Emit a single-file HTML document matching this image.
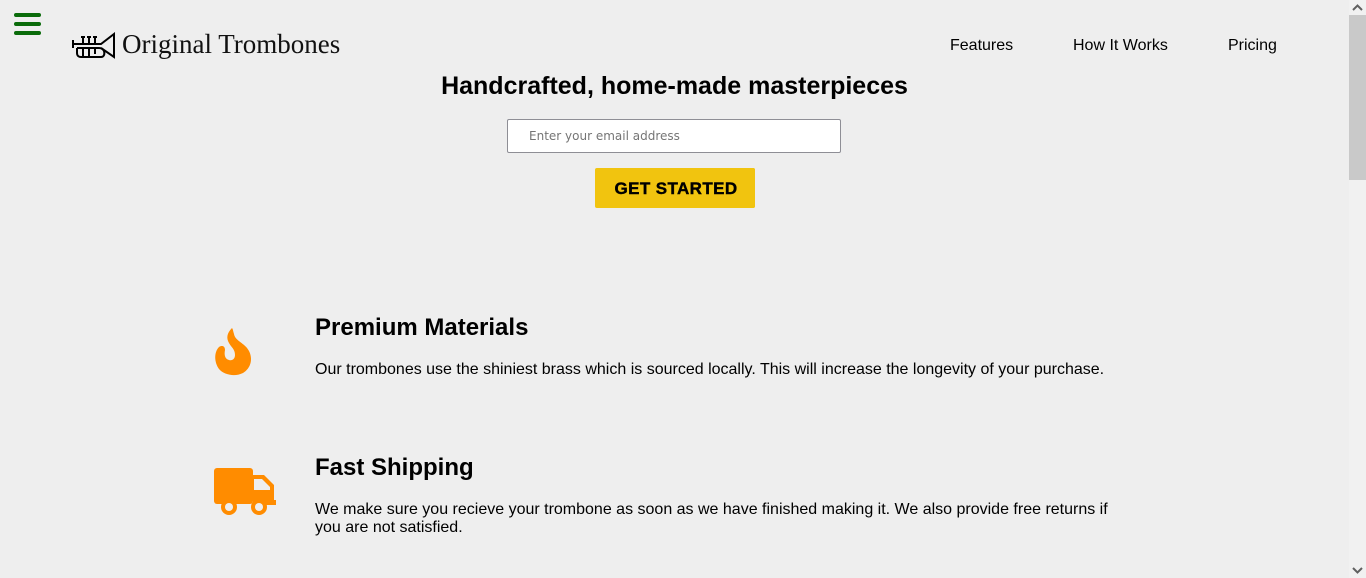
<!DOCTYPE html>
<html><head><meta charset="utf-8"><style>
html,body{margin:0;padding:0;}
body{width:1366px;height:578px;overflow:hidden;background:#eeeeee;font-family:"Liberation Sans",Arial,sans-serif;position:relative;color:#000;}
.abs{position:absolute;}
.ham{left:14px;top:13px;width:27px;}
.ham div{height:4px;background:#0a6b0a;border-radius:2px;margin-bottom:5px;}
.logo{left:122px;top:29px;font-family:"Liberation Serif","DejaVu Serif",serif;font-size:27px;color:#111;letter-spacing:0px;}
.nav{top:37px;font-size:16px;}
h1{position:absolute;margin:0;left:0;width:1349px;text-align:center;top:72px;font-size:25px;font-weight:bold;}
.inp{left:507px;top:119px;width:332px;height:32px;background:#fff;border:1px solid #8e8e95;border-radius:2px;box-sizing:content-box;}
.inp span{position:absolute;left:21px;top:9px;font-family:"DejaVu Sans",sans-serif;font-size:12px;color:#757575;}
.btn{left:597px;top:168px;width:158px;height:40px;background:#f1c40f;border-radius:2px;text-align:center;line-height:42px;font-weight:bold;font-size:17px;letter-spacing:0.4px;-webkit-text-stroke:0.4px #000;}
.btnbg{left:595px;top:168px;width:160px;height:40px;background:#f1c40f;border-radius:2px;}
.ft{left:315px;font-size:24px;font-weight:bold;}
.fp{left:315px;font-size:16px;width:810px;line-height:18px;}
.sb{left:1349px;top:0;width:17px;height:578px;background:#f1f1f1;}
.thumb{left:1349px;top:15px;width:17px;height:165px;background:#c9c9c9;}
</style></head><body>
<div class="abs ham"><div></div><div></div><div></div></div>
<svg class="abs" style="left:71px;top:32px" width="45" height="28" viewBox="0 0 45 28">
<g fill="none" stroke="#000" stroke-width="2">
<path d="M2 8 V16 M2 12 H30 L43 2 V25 L30 16"/>
<path d="M6 16 V21 C6 24 8 25 10 25 H30 C33 25 34 22 33 19 C32 17 30 16 28 16 H6"/>
<path d="M12 12 V5 M18 12 V5 M24 12 V5 M10 5 h4 M16 5 h4 M22 5 h4"/>
<path d="M12 16 V25 M18 16 V25 M24 16 V22"/>
</g></svg>
<div class="abs logo">Original Trombones</div>
<div class="abs nav" style="left:950px">Features</div>
<div class="abs nav" style="left:1073px">How It Works</div>
<div class="abs nav" style="left:1228px">Pricing</div>
<h1>Handcrafted, home-made masterpieces</h1>
<div class="abs inp"><span>Enter your email address</span></div>
<div class="abs btnbg"></div>
<div class="abs btn">GET STARTED</div>

<svg class="abs" style="left:213px;top:327px" width="40" height="50" viewBox="0 0 40 50">
<path fill="#ff8c00" d="M19 1 C14 6 13 11 16 16 C18 20 22 22 22 28 C22 32 19 34 16 33 C12 32 11 28 12 23 C12 19 9 18 6 20 C1 25 1 35 6 42 C11 48 22 50 30 46 C38 41 40 32 36 24 C32 16 22 14 21 7 C20 4 20 2 19 1 Z"/>
</svg>
<div class="abs ft" style="top:314px">Premium Materials</div>
<div class="abs fp" style="top:361px">Our trombones use the shiniest brass which is sourced locally. This will increase the longevity of your purchase.</div>

<svg class="abs" style="left:213px;top:467px" width="64" height="50" viewBox="0 0 64 50">
<g fill="#ff8c00">
<rect x="1" y="1" width="39" height="36" rx="3"/>
<path d="M40 8 H51 L61 18 V33 H63 V38 H40 Z"/>
<circle cx="16" cy="40" r="8"/><circle cx="46" cy="40" r="8"/>
</g>
<path fill="#eee" d="M41 12 H49 L57 20 V23 H41 Z"/>
<circle cx="16" cy="40" r="4" fill="#eee"/><circle cx="46" cy="40" r="4" fill="#eee"/>
</svg>
<div class="abs ft" style="top:454px">Fast Shipping</div>
<div class="abs fp" style="top:501px">We make sure you recieve your trombone as soon as we have finished making it. We also provide free returns if you are not satisfied.</div>

<div class="abs sb"></div>
<div class="abs thumb"></div>
<svg class="abs" style="left:1352px;top:4px" width="11" height="8"><path d="M1 6 L5.5 1.5 L10 6" stroke="#606060" stroke-width="2" fill="none"/></svg>
<svg class="abs" style="left:1352px;top:566px" width="11" height="8"><path d="M1 2 L5.5 6.5 L10 2" stroke="#606060" stroke-width="2" fill="none"/></svg>
</body></html>
